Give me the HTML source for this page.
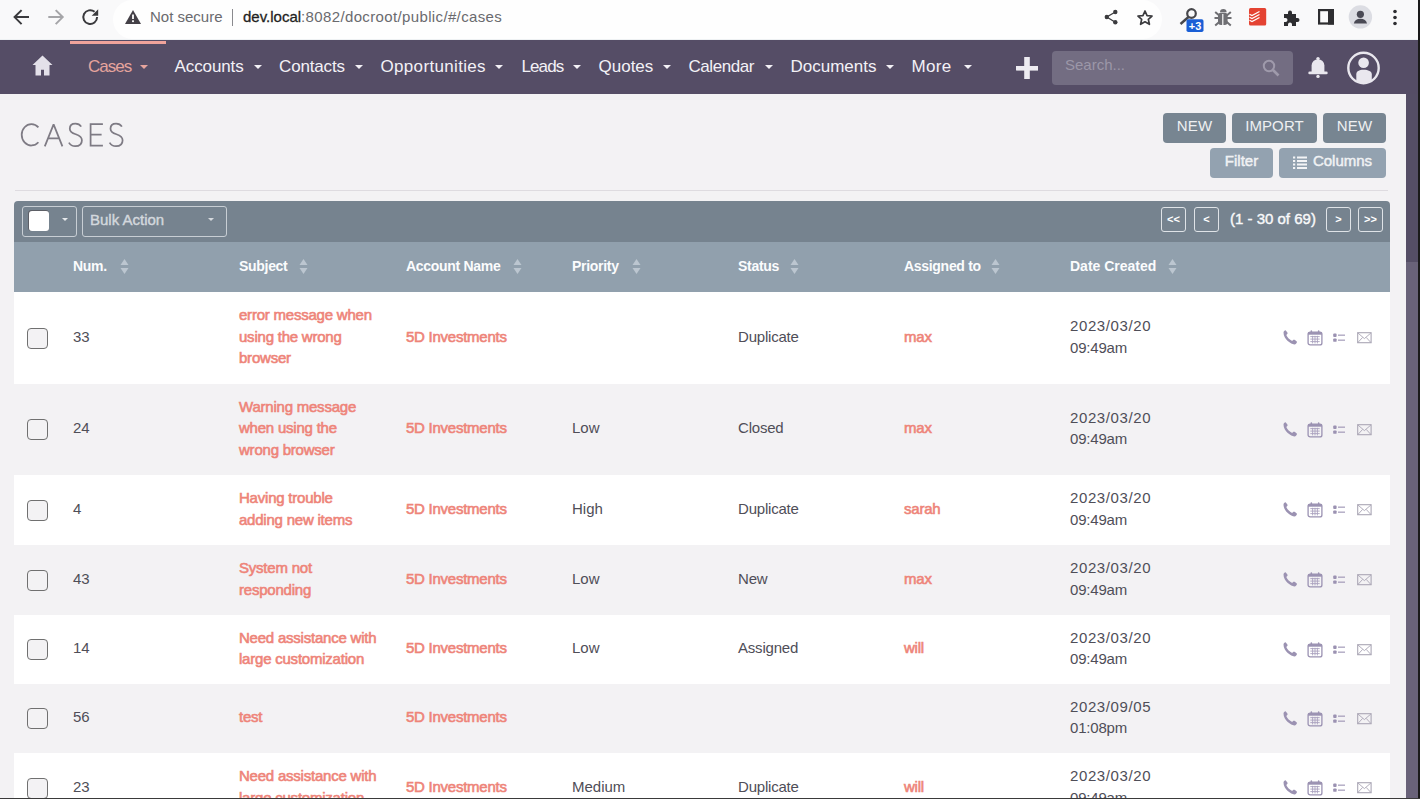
<!DOCTYPE html>
<html><head><meta charset="utf-8">
<style>
*{box-sizing:border-box;margin:0;padding:0}
html,body{width:1420px;height:799px;overflow:hidden;background:#f3f2f4;font-family:"Liberation Sans",sans-serif;position:relative}
svg{display:block;position:absolute}
#chrome{position:absolute;left:0;top:0;width:1420px;height:40px;background:#f9f9fa;border-bottom:1px solid #eef1f3}
#omni{position:absolute;left:113px;top:0px;width:1049px;height:39px;background:#fefefe;border-radius:20px;}
.ct{position:absolute;top:7px;font-size:15px;line-height:20px;white-space:nowrap}
#nav{position:absolute;left:0;top:40px;width:1418px;height:54px;background:#554d66;}
.ni{position:absolute;top:17px;font-size:17px;color:#f3f1f6;white-space:nowrap;line-height:20px}
.caret{position:absolute;top:25px;width:0;height:0;border-left:4px solid transparent;border-right:4px solid transparent;border-top:4.5px solid #f3f1f6;}
.sc{position:absolute;width:0;height:0;border-left:3.2px solid transparent;border-right:3.2px solid transparent;border-top:3.5px solid #e6e9ec;}
#scroll{position:absolute;left:1406px;top:94px;width:12px;height:705px;background:linear-gradient(#554e66 0,#554e66 168px,#696279 168px)}
#edge{position:absolute;left:1418px;top:0;width:2px;height:799px;background:#1a1a1a}
#bottom{position:absolute;left:0;top:798px;width:1420px;height:1px;background:#3a3a3a}
.btn{position:absolute;height:30px;border-radius:4px;background:#778591;color:#eef0f2;font-size:15px;letter-spacing:0.1px;text-align:center;line-height:26px;white-space:nowrap}
.btn2{background:#93a2b0;letter-spacing:0;font-size:15px;-webkit-text-stroke:0.45px #f3f4f6}
.th{position:absolute;top:16px;font-size:14px;font-weight:bold;color:#fbfcfd;white-space:nowrap;line-height:17px;letter-spacing:-0.3px}
.row{position:absolute;left:14px;width:1376px;}
.cb{position:absolute;left:13px;width:21px;height:21px;border:1.6px solid #707070;border-radius:4px;background:#f3f2f4}
.cell{position:absolute;font-size:15px;line-height:21.5px;color:#4f4e58;white-space:nowrap}
.lk{color:#ee8479;-webkit-text-stroke:0.6px #ee8479;letter-spacing:-0.22px}
.acts{position:absolute;left:1268px;width:100px;height:16px}
.pbtn{position:absolute;top:6px;width:25px;height:25px;border:1px solid #dfe3e7;border-radius:3px;color:#fff;font-size:11px;font-weight:bold;text-align:center;line-height:22px}

.acc{letter-spacing:-0.25px}
.st{letter-spacing:-0.2px}

</style></head><body>
<div id="chrome">
  <div id="omni"></div>
  <!-- back -->
  <svg style="left:0;top:0" width="110" height="40" viewBox="0 0 110 40"><path d="M29 17.1H15M21.6 10.1L14.6 17.1L21.6 24.1" fill="none" stroke="#3a3a3d" stroke-width="2"/><path d="M48.3 17.1H62.3M55.7 10.1L62.7 17.1L55.7 24.1" fill="none" stroke="#a5a5a8" stroke-width="2"/><path d="M97.1 17.1A6.9 6.9 0 1 1 94.6 11.8" fill="none" stroke="#3a3a3d" stroke-width="2"/><path d="M98.2 9.3V15.8H91.7Z" fill="#3a3a3d"/></svg>
  
  
  <svg style="left:124px;top:9px" width="18" height="16" viewBox="0 0 18 16"><path d="M9 1L17 15H1Z" fill="#444047"/><rect x="8.1" y="5.5" width="1.8" height="4.5" fill="#fff"/><rect x="8.1" y="11.3" width="1.8" height="1.8" fill="#fff"/></svg>
  <div class="ct" style="left:150px;color:#6a6a6e">Not secure</div>
  <div class="abs" style="position:absolute;left:232px;top:9px;width:1px;height:17px;background:#8a8a8e"></div>
  <div class="ct" style="left:243px;color:#1f1f22"><span style="-webkit-text-stroke:0.3px #1f1f22">dev.local</span><span style="color:#6a6a6e;letter-spacing:0.36px">:8082/docroot/public/#/cases</span></div>
  <!-- right icons -->
  <svg style="left:1101px;top:7px" width="20" height="20" viewBox="0 0 20 20"><circle cx="14.3" cy="5" r="2.2" fill="#3c3c3f"/><circle cx="5.8" cy="10" r="2.2" fill="#3c3c3f"/><circle cx="14.3" cy="15.3" r="2.2" fill="#3c3c3f"/><path d="M14.3 5L5.8 10L14.3 15.3" fill="none" stroke="#3c3c3f" stroke-width="1.3"/></svg>
  <svg style="left:1136px;top:9px" width="18" height="18" viewBox="0 0 20 20"><path d="M10 2.2L12.3 7.3L17.8 7.8L13.7 11.5L14.9 17L10 14.2L5.1 17L6.3 11.5L2.2 7.8L7.7 7.3Z" fill="none" stroke="#3c3c3f" stroke-width="1.9" stroke-linejoin="round"/></svg>
  <svg style="left:1177px;top:6px" width="28" height="28" viewBox="0 0 28 28"><circle cx="14.5" cy="7.5" r="4.3" fill="none" stroke="#47474b" stroke-width="2.2"/><path d="M11.5 11L3.5 18" stroke="#47474b" stroke-width="2.4"/><rect x="9.5" y="13.3" width="17" height="12.7" rx="1.8" fill="#1a5fd6"/><text x="18" y="23.6" font-size="11" font-weight="bold" fill="#fff" text-anchor="middle" font-family="Liberation Sans">+3</text></svg>
  <svg style="left:1212px;top:7px" width="22" height="22" viewBox="0 0 22 22"><path d="M8 5.2A3.3 3.3 0 0 1 14.6 5.2Z" fill="#6f6f73"/><rect x="6" y="5.8" width="9.6" height="12.2" rx="3" fill="#6f6f73"/><path d="M3.2 5L18.8 18.5M18.8 5L3.2 18.5M2.5 11H19.5" stroke="#6f6f73" stroke-width="2"/><rect x="10.2" y="7" width="1.2" height="11" fill="#f9f9fa"/></svg>
  <svg style="left:1249px;top:8px" width="18" height="18" viewBox="0 0 18 18"><rect x="0" y="0" width="17.2" height="17.5" rx="1.5" fill="#e44332"/><path d="M0.5 6.2L3 7.5L10.5 3.5M0.5 9.2L3 10.5L10.5 6.5M0.5 12.2L3 13.5L10.5 9.5" fill="none" stroke="#fff" stroke-width="1.2"/></svg>
  <svg style="left:1281px;top:8px" width="20" height="20" viewBox="0 0 20 20"><path d="M3 6H7V4.5A2 2 0 0 1 11 4.5V6H15V10H16.5A2 2 0 0 1 16.5 14H15V18H11V16.5A2 2 0 0 0 7 16.5V18H3V14H4.5A2 2 0 0 0 4.5 10H3Z" fill="#2d2d30"/></svg>
  <svg style="left:1318px;top:9px" width="17" height="17" viewBox="0 0 17 17"><rect x="1.1" y="1.1" width="13.8" height="13.4" fill="none" stroke="#2d2d30" stroke-width="2.2"/><rect x="10" y="0" width="6" height="15.6" fill="#2d2d30"/></svg>
  <svg style="left:1348px;top:5px" width="25" height="24" viewBox="0 0 25 24"><circle cx="12.4" cy="11.9" r="11.7" fill="#dcdde3"/><circle cx="12.4" cy="9.3" r="3.6" fill="#4a4a55"/><path d="M5.8 18.6C6.3 15.3 8.8 13.7 12.4 13.7C16 13.7 18.5 15.3 19 18.6Z" fill="#4a4a55"/></svg>
  <svg style="left:1390px;top:8px" width="10" height="20" viewBox="0 0 10 20"><circle cx="5" cy="3.5" r="1.8" fill="#2d2d30"/><circle cx="5" cy="9.5" r="1.8" fill="#2d2d30"/><circle cx="5" cy="15.5" r="1.8" fill="#2d2d30"/></svg>
</div>
<div id="nav">
  <svg style="left:32px;top:15px" width="21" height="21" viewBox="0 0 21 21"><path d="M10.5 0.5L20.5 10H17.5V20.5H12V14.7H9V20.5H3.5V10H0.5Z" fill="#e3e0e9"/></svg>
  <div class="abs" style="position:absolute;left:70px;top:1px;width:96px;height:3px;background:#f0a39b"></div>
    <div class="ni" style="left:88px;letter-spacing:-1.0px;color:#e6a49d">Cases</div><div class="caret" style="left:140px;border-top-color:#e6a49d"></div>
  <div class="ni" style="left:174.5px;letter-spacing:-0.1px">Accounts</div><div class="caret" style="left:254px"></div>
  <div class="ni" style="left:279px;letter-spacing:-0.15px">Contacts</div><div class="caret" style="left:355px"></div>
  <div class="ni" style="left:380.5px;letter-spacing:0.33px">Opportunities</div><div class="caret" style="left:495px"></div>
  <div class="ni" style="left:521.5px;letter-spacing:-0.9px">Leads</div><div class="caret" style="left:573px"></div>
  <div class="ni" style="left:598.5px;letter-spacing:0px">Quotes</div><div class="caret" style="left:662.5px"></div>
  <div class="ni" style="left:688.5px;letter-spacing:-0.45px">Calendar</div><div class="caret" style="left:764.5px"></div>
  <div class="ni" style="left:790.5px;letter-spacing:0px">Documents</div><div class="caret" style="left:886px"></div>
  <div class="ni" style="left:911.5px;letter-spacing:0.35px">More</div><div class="caret" style="left:964px"></div>
  <svg style="left:1016px;top:17px" width="22" height="22" viewBox="0 0 22 22"><path d="M11 0V22" stroke="#eeecf2" stroke-width="5.6"/><path d="M0 11.3H22" stroke="#eeecf2" stroke-width="4.6"/></svg>
  <div class="abs" style="position:absolute;left:1052px;top:11px;width:241px;height:34px;background:#736d82;border-radius:4px"></div>
  <div class="ni" style="left:1065px;top:15px;font-size:15px;color:#9c97a8">Search...</div>
  <svg style="left:1262px;top:19px" width="18" height="18" viewBox="0 0 18 18"><circle cx="7" cy="7" r="5.2" fill="none" stroke="#9f9aab" stroke-width="2"/><path d="M11 11L16.5 16.5" stroke="#9f9aab" stroke-width="2.6"/></svg>
  <svg style="left:1307px;top:16px" width="22" height="23" viewBox="0 0 22 23"><circle cx="11" cy="2.6" r="1.7" fill="#e9e7ee"/><path d="M4.6 17V9.6A6.4 6.4 0 0 1 17.4 9.6V17Z" fill="#e9e7ee"/><rect x="1.3" y="15.6" width="19.4" height="2.6" rx="1.3" fill="#e9e7ee"/><circle cx="11" cy="20.4" r="1.7" fill="#e9e7ee"/></svg>
  <svg style="left:1346px;top:11px" width="35" height="34" viewBox="0 0 35 34"><defs><clipPath id="uc"><circle cx="17.5" cy="17" r="15"/></clipPath></defs><circle cx="17.5" cy="17" r="15.2" fill="none" stroke="#e9e7ee" stroke-width="2.4"/><circle cx="17.6" cy="11.8" r="5.3" fill="#e9e7ee"/><path clip-path="url(#uc)" d="M10.3 34V23.5C10.3 20.3 13 18.8 17.6 18.8C22.2 18.8 25.8 20.3 25.8 23.5V34Z" fill="#e9e7ee"/></svg>
</div>
<!-- page header -->
<div class="abs" style="position:absolute;left:12px;top:94px;width:1394px;height:705px;background:#f3f2f4"></div>
<svg style="left:0;top:0" width="140" height="160" viewBox="0 0 140 160"><g fill="none" stroke="#7e7b84" stroke-width="1.75">
<path d="M38.4 127.45 A9.71 10.65 0 1 0 38.4 142.25"/>
<path d="M44.8 146.4 L53.6 124.4 L62.4 146.4 M47.6 138.3 H59.6" stroke-linejoin="bevel"/>
<path id="S1" d="M81.2 126.6 C79.8 124.4 77.8 123.6 75.4 123.6 C71.9 123.6 69.8 125.7 69.8 128.7 C69.8 135.9 81.9 132.6 81.9 140.2 C81.9 144.1 79.1 146.2 75.3 146.2 C72.5 146.2 70.3 144.9 68.9 142.6"/>
<path d="M102.9 124.0 H90.6 V145.6 H102.9 M90.6 134.7 H101.6"/>
<path d="M121.9 126.6 C120.5 124.4 118.5 123.6 116.1 123.6 C112.6 123.6 110.5 125.7 110.5 128.7 C110.5 135.9 122.6 132.6 122.6 140.2 C122.6 144.1 119.8 146.2 116.0 146.2 C113.2 146.2 111.0 144.9 109.6 142.6"/>
</g></svg>
<div class="btn" style="left:1163px;top:113px;width:63px">NEW</div>
<div class="btn" style="left:1232px;top:113px;width:85px">IMPORT</div>
<div class="btn" style="left:1323px;top:113px;width:63px">NEW</div>
<div class="btn btn2" style="left:1210px;top:148px;width:63px">Filter</div>
<div class="btn btn2" style="left:1279px;top:148px;width:107px;padding-left:20px">Columns</div>
<svg style="left:1292px;top:155px" width="16" height="16" viewBox="0 0 16 16"><path d="M1 2.5h2.2M1 6h2.2M1 9.5h2.2M1 13h2.2M5 2.5h10M5 6h10M5 9.5h10M5 13h10" stroke="#f3f4f6" stroke-width="2"/></svg>
<div class="abs" style="position:absolute;left:15px;top:190px;width:1373px;height:1px;background:#dedbe0"></div>
<!-- table top bar -->
<div class="abs" style="position:absolute;left:14px;top:201px;width:1376px;height:41px;background:#76838f;border-radius:4px 4px 0 0"></div>
<div class="abs" style="position:absolute;left:22px;top:206px;width:55px;height:31px;border:1px solid #c8ced4;border-radius:3px"></div>
<div class="abs" style="position:absolute;left:29px;top:211px;width:20px;height:20px;background:#fff;border-radius:3px;box-shadow:-0.5px -0.5px 0 0.5px #5d5f66"></div>
<div class="sc" style="left:62px;top:218px"></div>
<div class="abs" style="position:absolute;left:82px;top:206px;width:145px;height:31px;border:1px solid #c8ced4;border-radius:3px"></div>
<div style="position:absolute;left:90px;top:211px;font-size:15px;line-height:17px;color:#d3d8dd;-webkit-text-stroke:0.4px #d3d8dd">Bulk Action</div>
<div class="sc" style="left:207.5px;top:218px;border-top-color:#d5d9de"></div>
<div class="pbtn" style="left:1161px;top:207px">&lt;&lt;</div>
<div class="pbtn" style="left:1194px;top:207px">&lt;</div>
<div style="position:absolute;left:1230px;top:210px;font-size:15px;line-height:17px;color:#f8f9fa;-webkit-text-stroke:0.4px #f8f9fa">(1 - 30 of 69)</div>
<div class="pbtn" style="left:1326px;top:207px">&gt;</div>
<div class="pbtn" style="left:1358px;top:207px">&gt;&gt;</div>
<!-- column header -->
<div class="abs" style="position:absolute;left:14px;top:242px;width:1376px;height:50px;background:#91a0ad">
  <div class="th" style="left:59px">Num.</div>
  <div class="th" style="left:225px">Subject</div>
  <div class="th" style="left:392px">Account Name</div>
  <div class="th" style="left:558px">Priority</div>
  <div class="th" style="left:724px">Status</div>
  <div class="th" style="left:890px">Assigned to</div>
  <div class="th" style="left:1056px;letter-spacing:0">Date Created</div>
  <svg style="left:106px;top:16px" width="9" height="17" viewBox="0 0 9 17"><path d="M4.5 1L8.5 7H0.5Z" fill="#bcc6d0"/><path d="M4.5 16L8.5 10H0.5Z" fill="#bcc6d0"/></svg><svg style="left:285px;top:16px" width="9" height="17" viewBox="0 0 9 17"><path d="M4.5 1L8.5 7H0.5Z" fill="#bcc6d0"/><path d="M4.5 16L8.5 10H0.5Z" fill="#bcc6d0"/></svg><svg style="left:499px;top:16px" width="9" height="17" viewBox="0 0 9 17"><path d="M4.5 1L8.5 7H0.5Z" fill="#bcc6d0"/><path d="M4.5 16L8.5 10H0.5Z" fill="#bcc6d0"/></svg><svg style="left:618px;top:16px" width="9" height="17" viewBox="0 0 9 17"><path d="M4.5 1L8.5 7H0.5Z" fill="#bcc6d0"/><path d="M4.5 16L8.5 10H0.5Z" fill="#bcc6d0"/></svg><svg style="left:776px;top:16px" width="9" height="17" viewBox="0 0 9 17"><path d="M4.5 1L8.5 7H0.5Z" fill="#bcc6d0"/><path d="M4.5 16L8.5 10H0.5Z" fill="#bcc6d0"/></svg><svg style="left:977px;top:16px" width="9" height="17" viewBox="0 0 9 17"><path d="M4.5 1L8.5 7H0.5Z" fill="#bcc6d0"/><path d="M4.5 16L8.5 10H0.5Z" fill="#bcc6d0"/></svg><svg style="left:1154px;top:16px" width="9" height="17" viewBox="0 0 9 17"><path d="M4.5 1L8.5 7H0.5Z" fill="#bcc6d0"/><path d="M4.5 16L8.5 10H0.5Z" fill="#bcc6d0"/></svg>
</div>

<div class="row" style="top:292px;height:92px;background:#ffffff"><div class="cb" style="top:35.5px"></div><div class="cell " style="left:59px;top:33.8px">33</div><div class="cell lk" style="left:225px;top:12.2px">error message when<br>using the wrong<br>browser</div><div class="cell lk acc" style="left:392px;top:33.8px">5D Investments</div><div class="cell st" style="left:724px;top:33.8px">Duplicate</div><div class="cell lk" style="left:890px;top:33.8px">max</div><div class="cell" style="left:1056px;top:23.0px"><span style="letter-spacing:0.6px">2023/03/20</span><br><span style="letter-spacing:-0.2px">09:49am</span></div><div class="acts" style="top:38.0px"><svg style="left:0;top:0" width="16" height="16" viewBox="0 0 16 16"><path d="M1.5 2.6C1.5 1.3 2.6 0.4 3.6 0.3L5.2 2.2C5.8 3 5.6 3.7 5 4.3L4.3 5C5.3 7.4 7.6 9.8 10.2 10.9L11 10.1C11.5 9.6 12.3 9.5 13 10L15 11.7C14.9 13 13.8 14.3 12.4 14.4C9.5 14.6 1.5 9.5 1.5 2.6Z" fill="#9b92b2"/></svg>
<svg style="left:25px;top:0" width="16" height="16" viewBox="0 0 16 16"><rect x="1.1" y="2.1" width="13.8" height="12.8" rx="2" fill="none" stroke="#9b92b2" stroke-width="1.3"/><rect x="1.1" y="2.1" width="13.8" height="2.6" fill="#9b92b2"/><rect x="3.6" y="0.3" width="1.5" height="2.8" rx="0.7" fill="#9b92b2"/><rect x="10.9" y="0.3" width="1.5" height="2.8" rx="0.7" fill="#9b92b2"/><path d="M3.3 6.6h9.4M3.3 9.1h9.4M3.3 11.6h9.4M5.6 5.8v7.6M8 5.8v7.6M10.4 5.8v7.6" stroke="#aaa2c0" stroke-width="0.9"/></svg>
<svg style="left:50px;top:0" width="16" height="16" viewBox="0 0 16 16"><rect x="1.2" y="3.5" width="3.4" height="3.4" rx="0.9" fill="#9b92b2"/><rect x="1.2" y="8.4" width="3.4" height="3.4" rx="0.9" fill="#9b92b2"/><rect x="6" y="4.6" width="7" height="1.1" fill="#9b92b2"/><rect x="6" y="9.6" width="7" height="1.1" fill="#9b92b2"/></svg>
<svg style="left:75px;top:0" width="16" height="16" viewBox="0 0 16 16"><rect x="0.7" y="2.7" width="13.4" height="10" fill="none" stroke="#aaa6b5" stroke-width="1.1"/><path d="M0.9 3L7.4 8.6L13.9 3M0.9 12.5L5.6 7.4M13.9 12.5L9.2 7.4" fill="none" stroke="#aaa6b5" stroke-width="0.9"/></svg>
</div></div><div class="row" style="top:384px;height:91px;background:#f3f2f4"><div class="cb" style="top:35.0px"></div><div class="cell " style="left:59px;top:33.2px">24</div><div class="cell lk" style="left:225px;top:11.8px">Warning message<br>when using the<br>wrong browser</div><div class="cell lk acc" style="left:392px;top:33.2px">5D Investments</div><div class="cell " style="left:558px;top:33.2px">Low</div><div class="cell st" style="left:724px;top:33.2px">Closed</div><div class="cell lk" style="left:890px;top:33.2px">max</div><div class="cell" style="left:1056px;top:22.5px"><span style="letter-spacing:0.6px">2023/03/20</span><br><span style="letter-spacing:-0.2px">09:49am</span></div><div class="acts" style="top:37.5px"><svg style="left:0;top:0" width="16" height="16" viewBox="0 0 16 16"><path d="M1.5 2.6C1.5 1.3 2.6 0.4 3.6 0.3L5.2 2.2C5.8 3 5.6 3.7 5 4.3L4.3 5C5.3 7.4 7.6 9.8 10.2 10.9L11 10.1C11.5 9.6 12.3 9.5 13 10L15 11.7C14.9 13 13.8 14.3 12.4 14.4C9.5 14.6 1.5 9.5 1.5 2.6Z" fill="#9b92b2"/></svg>
<svg style="left:25px;top:0" width="16" height="16" viewBox="0 0 16 16"><rect x="1.1" y="2.1" width="13.8" height="12.8" rx="2" fill="none" stroke="#9b92b2" stroke-width="1.3"/><rect x="1.1" y="2.1" width="13.8" height="2.6" fill="#9b92b2"/><rect x="3.6" y="0.3" width="1.5" height="2.8" rx="0.7" fill="#9b92b2"/><rect x="10.9" y="0.3" width="1.5" height="2.8" rx="0.7" fill="#9b92b2"/><path d="M3.3 6.6h9.4M3.3 9.1h9.4M3.3 11.6h9.4M5.6 5.8v7.6M8 5.8v7.6M10.4 5.8v7.6" stroke="#aaa2c0" stroke-width="0.9"/></svg>
<svg style="left:50px;top:0" width="16" height="16" viewBox="0 0 16 16"><rect x="1.2" y="3.5" width="3.4" height="3.4" rx="0.9" fill="#9b92b2"/><rect x="1.2" y="8.4" width="3.4" height="3.4" rx="0.9" fill="#9b92b2"/><rect x="6" y="4.6" width="7" height="1.1" fill="#9b92b2"/><rect x="6" y="9.6" width="7" height="1.1" fill="#9b92b2"/></svg>
<svg style="left:75px;top:0" width="16" height="16" viewBox="0 0 16 16"><rect x="0.7" y="2.7" width="13.4" height="10" fill="none" stroke="#aaa6b5" stroke-width="1.1"/><path d="M0.9 3L7.4 8.6L13.9 3M0.9 12.5L5.6 7.4M13.9 12.5L9.2 7.4" fill="none" stroke="#aaa6b5" stroke-width="0.9"/></svg>
</div></div><div class="row" style="top:475px;height:70px;background:#ffffff"><div class="cb" style="top:24.5px"></div><div class="cell " style="left:59px;top:22.8px">4</div><div class="cell lk" style="left:225px;top:12.0px">Having trouble<br>adding new items</div><div class="cell lk acc" style="left:392px;top:22.8px">5D Investments</div><div class="cell " style="left:558px;top:22.8px">High</div><div class="cell st" style="left:724px;top:22.8px">Duplicate</div><div class="cell lk" style="left:890px;top:22.8px">sarah</div><div class="cell" style="left:1056px;top:12.0px"><span style="letter-spacing:0.6px">2023/03/20</span><br><span style="letter-spacing:-0.2px">09:49am</span></div><div class="acts" style="top:27.0px"><svg style="left:0;top:0" width="16" height="16" viewBox="0 0 16 16"><path d="M1.5 2.6C1.5 1.3 2.6 0.4 3.6 0.3L5.2 2.2C5.8 3 5.6 3.7 5 4.3L4.3 5C5.3 7.4 7.6 9.8 10.2 10.9L11 10.1C11.5 9.6 12.3 9.5 13 10L15 11.7C14.9 13 13.8 14.3 12.4 14.4C9.5 14.6 1.5 9.5 1.5 2.6Z" fill="#9b92b2"/></svg>
<svg style="left:25px;top:0" width="16" height="16" viewBox="0 0 16 16"><rect x="1.1" y="2.1" width="13.8" height="12.8" rx="2" fill="none" stroke="#9b92b2" stroke-width="1.3"/><rect x="1.1" y="2.1" width="13.8" height="2.6" fill="#9b92b2"/><rect x="3.6" y="0.3" width="1.5" height="2.8" rx="0.7" fill="#9b92b2"/><rect x="10.9" y="0.3" width="1.5" height="2.8" rx="0.7" fill="#9b92b2"/><path d="M3.3 6.6h9.4M3.3 9.1h9.4M3.3 11.6h9.4M5.6 5.8v7.6M8 5.8v7.6M10.4 5.8v7.6" stroke="#aaa2c0" stroke-width="0.9"/></svg>
<svg style="left:50px;top:0" width="16" height="16" viewBox="0 0 16 16"><rect x="1.2" y="3.5" width="3.4" height="3.4" rx="0.9" fill="#9b92b2"/><rect x="1.2" y="8.4" width="3.4" height="3.4" rx="0.9" fill="#9b92b2"/><rect x="6" y="4.6" width="7" height="1.1" fill="#9b92b2"/><rect x="6" y="9.6" width="7" height="1.1" fill="#9b92b2"/></svg>
<svg style="left:75px;top:0" width="16" height="16" viewBox="0 0 16 16"><rect x="0.7" y="2.7" width="13.4" height="10" fill="none" stroke="#aaa6b5" stroke-width="1.1"/><path d="M0.9 3L7.4 8.6L13.9 3M0.9 12.5L5.6 7.4M13.9 12.5L9.2 7.4" fill="none" stroke="#aaa6b5" stroke-width="0.9"/></svg>
</div></div><div class="row" style="top:545px;height:70px;background:#f3f2f4"><div class="cb" style="top:24.5px"></div><div class="cell " style="left:59px;top:22.8px">43</div><div class="cell lk" style="left:225px;top:12.0px">System not<br>responding</div><div class="cell lk acc" style="left:392px;top:22.8px">5D Investments</div><div class="cell " style="left:558px;top:22.8px">Low</div><div class="cell st" style="left:724px;top:22.8px">New</div><div class="cell lk" style="left:890px;top:22.8px">max</div><div class="cell" style="left:1056px;top:12.0px"><span style="letter-spacing:0.6px">2023/03/20</span><br><span style="letter-spacing:-0.2px">09:49am</span></div><div class="acts" style="top:27.0px"><svg style="left:0;top:0" width="16" height="16" viewBox="0 0 16 16"><path d="M1.5 2.6C1.5 1.3 2.6 0.4 3.6 0.3L5.2 2.2C5.8 3 5.6 3.7 5 4.3L4.3 5C5.3 7.4 7.6 9.8 10.2 10.9L11 10.1C11.5 9.6 12.3 9.5 13 10L15 11.7C14.9 13 13.8 14.3 12.4 14.4C9.5 14.6 1.5 9.5 1.5 2.6Z" fill="#9b92b2"/></svg>
<svg style="left:25px;top:0" width="16" height="16" viewBox="0 0 16 16"><rect x="1.1" y="2.1" width="13.8" height="12.8" rx="2" fill="none" stroke="#9b92b2" stroke-width="1.3"/><rect x="1.1" y="2.1" width="13.8" height="2.6" fill="#9b92b2"/><rect x="3.6" y="0.3" width="1.5" height="2.8" rx="0.7" fill="#9b92b2"/><rect x="10.9" y="0.3" width="1.5" height="2.8" rx="0.7" fill="#9b92b2"/><path d="M3.3 6.6h9.4M3.3 9.1h9.4M3.3 11.6h9.4M5.6 5.8v7.6M8 5.8v7.6M10.4 5.8v7.6" stroke="#aaa2c0" stroke-width="0.9"/></svg>
<svg style="left:50px;top:0" width="16" height="16" viewBox="0 0 16 16"><rect x="1.2" y="3.5" width="3.4" height="3.4" rx="0.9" fill="#9b92b2"/><rect x="1.2" y="8.4" width="3.4" height="3.4" rx="0.9" fill="#9b92b2"/><rect x="6" y="4.6" width="7" height="1.1" fill="#9b92b2"/><rect x="6" y="9.6" width="7" height="1.1" fill="#9b92b2"/></svg>
<svg style="left:75px;top:0" width="16" height="16" viewBox="0 0 16 16"><rect x="0.7" y="2.7" width="13.4" height="10" fill="none" stroke="#aaa6b5" stroke-width="1.1"/><path d="M0.9 3L7.4 8.6L13.9 3M0.9 12.5L5.6 7.4M13.9 12.5L9.2 7.4" fill="none" stroke="#aaa6b5" stroke-width="0.9"/></svg>
</div></div><div class="row" style="top:615px;height:69px;background:#ffffff"><div class="cb" style="top:24.0px"></div><div class="cell " style="left:59px;top:22.2px">14</div><div class="cell lk" style="left:225px;top:11.5px">Need assistance with<br>large customization</div><div class="cell lk acc" style="left:392px;top:22.2px">5D Investments</div><div class="cell " style="left:558px;top:22.2px">Low</div><div class="cell st" style="left:724px;top:22.2px">Assigned</div><div class="cell lk" style="left:890px;top:22.2px">will</div><div class="cell" style="left:1056px;top:11.5px"><span style="letter-spacing:0.6px">2023/03/20</span><br><span style="letter-spacing:-0.2px">09:49am</span></div><div class="acts" style="top:26.5px"><svg style="left:0;top:0" width="16" height="16" viewBox="0 0 16 16"><path d="M1.5 2.6C1.5 1.3 2.6 0.4 3.6 0.3L5.2 2.2C5.8 3 5.6 3.7 5 4.3L4.3 5C5.3 7.4 7.6 9.8 10.2 10.9L11 10.1C11.5 9.6 12.3 9.5 13 10L15 11.7C14.9 13 13.8 14.3 12.4 14.4C9.5 14.6 1.5 9.5 1.5 2.6Z" fill="#9b92b2"/></svg>
<svg style="left:25px;top:0" width="16" height="16" viewBox="0 0 16 16"><rect x="1.1" y="2.1" width="13.8" height="12.8" rx="2" fill="none" stroke="#9b92b2" stroke-width="1.3"/><rect x="1.1" y="2.1" width="13.8" height="2.6" fill="#9b92b2"/><rect x="3.6" y="0.3" width="1.5" height="2.8" rx="0.7" fill="#9b92b2"/><rect x="10.9" y="0.3" width="1.5" height="2.8" rx="0.7" fill="#9b92b2"/><path d="M3.3 6.6h9.4M3.3 9.1h9.4M3.3 11.6h9.4M5.6 5.8v7.6M8 5.8v7.6M10.4 5.8v7.6" stroke="#aaa2c0" stroke-width="0.9"/></svg>
<svg style="left:50px;top:0" width="16" height="16" viewBox="0 0 16 16"><rect x="1.2" y="3.5" width="3.4" height="3.4" rx="0.9" fill="#9b92b2"/><rect x="1.2" y="8.4" width="3.4" height="3.4" rx="0.9" fill="#9b92b2"/><rect x="6" y="4.6" width="7" height="1.1" fill="#9b92b2"/><rect x="6" y="9.6" width="7" height="1.1" fill="#9b92b2"/></svg>
<svg style="left:75px;top:0" width="16" height="16" viewBox="0 0 16 16"><rect x="0.7" y="2.7" width="13.4" height="10" fill="none" stroke="#aaa6b5" stroke-width="1.1"/><path d="M0.9 3L7.4 8.6L13.9 3M0.9 12.5L5.6 7.4M13.9 12.5L9.2 7.4" fill="none" stroke="#aaa6b5" stroke-width="0.9"/></svg>
</div></div><div class="row" style="top:684px;height:69px;background:#f3f2f4"><div class="cb" style="top:24.0px"></div><div class="cell " style="left:59px;top:22.2px">56</div><div class="cell lk" style="left:225px;top:22.2px">test</div><div class="cell lk acc" style="left:392px;top:22.2px">5D Investments</div><div class="cell" style="left:1056px;top:11.5px"><span style="letter-spacing:0.6px">2023/09/05</span><br><span style="letter-spacing:-0.2px">01:08pm</span></div><div class="acts" style="top:26.5px"><svg style="left:0;top:0" width="16" height="16" viewBox="0 0 16 16"><path d="M1.5 2.6C1.5 1.3 2.6 0.4 3.6 0.3L5.2 2.2C5.8 3 5.6 3.7 5 4.3L4.3 5C5.3 7.4 7.6 9.8 10.2 10.9L11 10.1C11.5 9.6 12.3 9.5 13 10L15 11.7C14.9 13 13.8 14.3 12.4 14.4C9.5 14.6 1.5 9.5 1.5 2.6Z" fill="#9b92b2"/></svg>
<svg style="left:25px;top:0" width="16" height="16" viewBox="0 0 16 16"><rect x="1.1" y="2.1" width="13.8" height="12.8" rx="2" fill="none" stroke="#9b92b2" stroke-width="1.3"/><rect x="1.1" y="2.1" width="13.8" height="2.6" fill="#9b92b2"/><rect x="3.6" y="0.3" width="1.5" height="2.8" rx="0.7" fill="#9b92b2"/><rect x="10.9" y="0.3" width="1.5" height="2.8" rx="0.7" fill="#9b92b2"/><path d="M3.3 6.6h9.4M3.3 9.1h9.4M3.3 11.6h9.4M5.6 5.8v7.6M8 5.8v7.6M10.4 5.8v7.6" stroke="#aaa2c0" stroke-width="0.9"/></svg>
<svg style="left:50px;top:0" width="16" height="16" viewBox="0 0 16 16"><rect x="1.2" y="3.5" width="3.4" height="3.4" rx="0.9" fill="#9b92b2"/><rect x="1.2" y="8.4" width="3.4" height="3.4" rx="0.9" fill="#9b92b2"/><rect x="6" y="4.6" width="7" height="1.1" fill="#9b92b2"/><rect x="6" y="9.6" width="7" height="1.1" fill="#9b92b2"/></svg>
<svg style="left:75px;top:0" width="16" height="16" viewBox="0 0 16 16"><rect x="0.7" y="2.7" width="13.4" height="10" fill="none" stroke="#aaa6b5" stroke-width="1.1"/><path d="M0.9 3L7.4 8.6L13.9 3M0.9 12.5L5.6 7.4M13.9 12.5L9.2 7.4" fill="none" stroke="#aaa6b5" stroke-width="0.9"/></svg>
</div></div><div class="row" style="top:753px;height:70px;background:#ffffff"><div class="cb" style="top:24.5px"></div><div class="cell " style="left:59px;top:22.8px">23</div><div class="cell lk" style="left:225px;top:12.0px">Need assistance with<br>large customization</div><div class="cell lk acc" style="left:392px;top:22.8px">5D Investments</div><div class="cell " style="left:558px;top:22.8px">Medium</div><div class="cell st" style="left:724px;top:22.8px">Duplicate</div><div class="cell lk" style="left:890px;top:22.8px">will</div><div class="cell" style="left:1056px;top:12.0px"><span style="letter-spacing:0.6px">2023/03/20</span><br><span style="letter-spacing:-0.2px">09:49am</span></div><div class="acts" style="top:27.0px"><svg style="left:0;top:0" width="16" height="16" viewBox="0 0 16 16"><path d="M1.5 2.6C1.5 1.3 2.6 0.4 3.6 0.3L5.2 2.2C5.8 3 5.6 3.7 5 4.3L4.3 5C5.3 7.4 7.6 9.8 10.2 10.9L11 10.1C11.5 9.6 12.3 9.5 13 10L15 11.7C14.9 13 13.8 14.3 12.4 14.4C9.5 14.6 1.5 9.5 1.5 2.6Z" fill="#9b92b2"/></svg>
<svg style="left:25px;top:0" width="16" height="16" viewBox="0 0 16 16"><rect x="1.1" y="2.1" width="13.8" height="12.8" rx="2" fill="none" stroke="#9b92b2" stroke-width="1.3"/><rect x="1.1" y="2.1" width="13.8" height="2.6" fill="#9b92b2"/><rect x="3.6" y="0.3" width="1.5" height="2.8" rx="0.7" fill="#9b92b2"/><rect x="10.9" y="0.3" width="1.5" height="2.8" rx="0.7" fill="#9b92b2"/><path d="M3.3 6.6h9.4M3.3 9.1h9.4M3.3 11.6h9.4M5.6 5.8v7.6M8 5.8v7.6M10.4 5.8v7.6" stroke="#aaa2c0" stroke-width="0.9"/></svg>
<svg style="left:50px;top:0" width="16" height="16" viewBox="0 0 16 16"><rect x="1.2" y="3.5" width="3.4" height="3.4" rx="0.9" fill="#9b92b2"/><rect x="1.2" y="8.4" width="3.4" height="3.4" rx="0.9" fill="#9b92b2"/><rect x="6" y="4.6" width="7" height="1.1" fill="#9b92b2"/><rect x="6" y="9.6" width="7" height="1.1" fill="#9b92b2"/></svg>
<svg style="left:75px;top:0" width="16" height="16" viewBox="0 0 16 16"><rect x="0.7" y="2.7" width="13.4" height="10" fill="none" stroke="#aaa6b5" stroke-width="1.1"/><path d="M0.9 3L7.4 8.6L13.9 3M0.9 12.5L5.6 7.4M13.9 12.5L9.2 7.4" fill="none" stroke="#aaa6b5" stroke-width="0.9"/></svg>
</div></div>
<div id="scroll"></div>
<div id="edge"></div>
<div id="bottom"></div>
</body></html>
